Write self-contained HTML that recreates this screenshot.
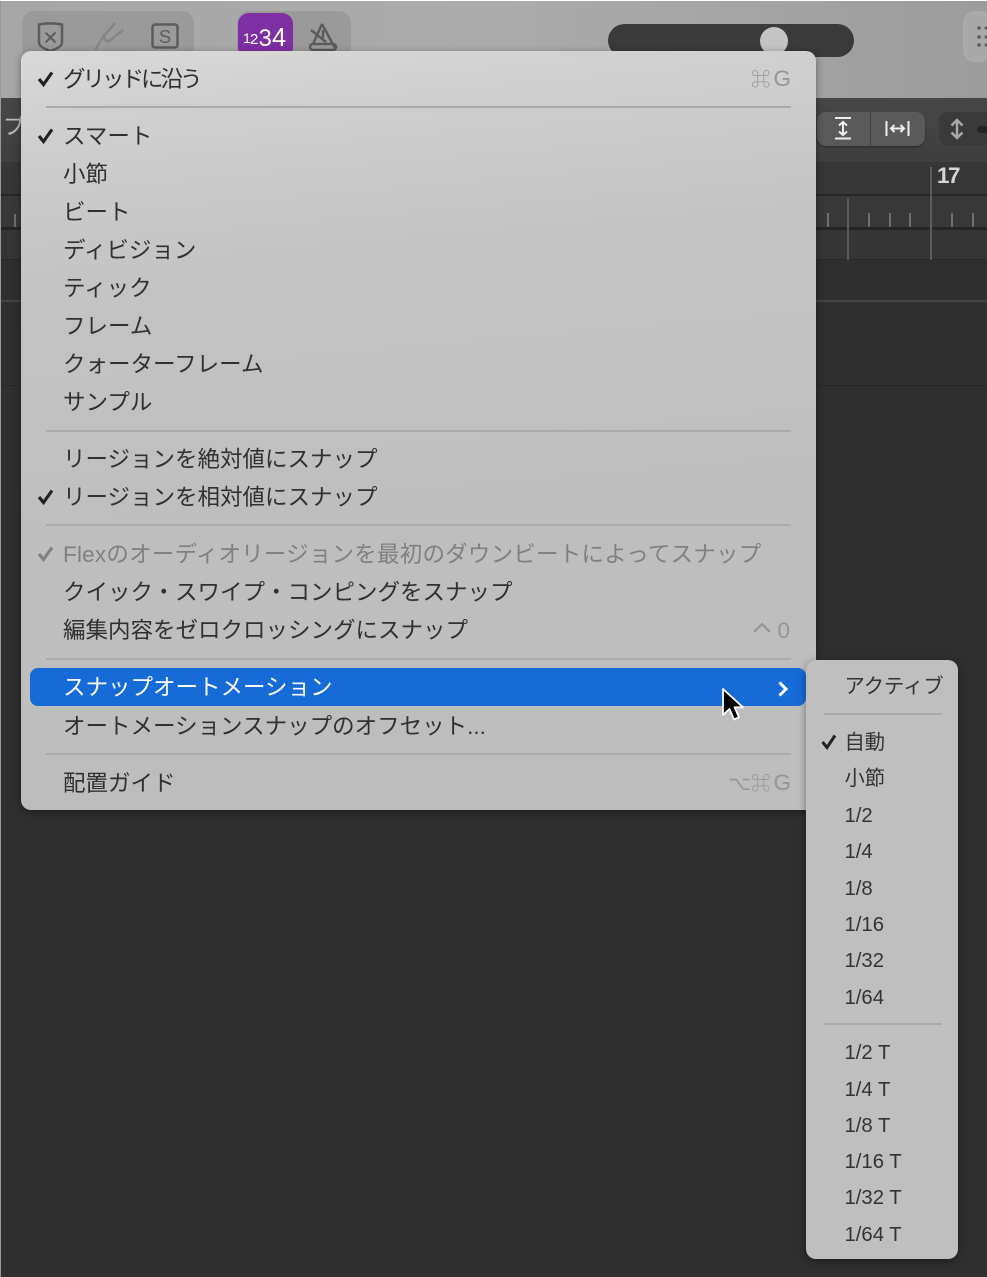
<!DOCTYPE html>
<html lang="ja"><head><meta charset="utf-8"><style>
html,body{margin:0;padding:0;background:#fff}
#p{position:relative;width:987px;height:1277px;overflow:hidden;background:#2f2f2f;font-family:"Liberation Sans","Noto Sans CJK JP",sans-serif}
#p>*{position:absolute}
.r{position:absolute;height:38px;line-height:38px;white-space:nowrap;color:#303030;font-size:22.5px;left:42px;margin-top:1px}
.menu{position:absolute;border-radius:10px;box-shadow:0 2px 8px rgba(0,0,0,.4)}
.sep{position:absolute;height:2px;background:#aaa}
.s{position:absolute;height:36px;line-height:36px;white-space:nowrap;color:#333;font-size:20.3px;left:38.5px;margin-top:1px}
.k{position:absolute;color:#959595;font-size:22.5px;height:38px;line-height:38px;white-space:nowrap;text-align:right}
.k i{font-style:normal;font-size:19.5px;margin-right:3px}
.c{position:absolute}
</style></head><body><div id="p">
<div style="left:1px;top:1px;width:986px;height:97px;background:linear-gradient(90deg,#a6a6a6,#acacac 50%,#9c9c9c)"></div>
<div style="left:0;top:0;width:1px;height:1277px;background:#999"></div>
<div style="left:0;top:0;width:987px;height:1px;background:#fff"></div>
<div style="left:22px;top:11px;width:172px;height:50px;border-radius:12px;background:#9a9a9a"></div>
<div style="left:237px;top:11px;width:114px;height:50px;border-radius:12px;background:#9a9a9a"></div>
<div style="left:238px;top:13px;width:55px;height:45px;border-radius:11px;background:#7d2fa3"></div>
<svg style="left:238px;top:13px" width="56" height="40" font-family="Liberation Sans" fill="#fff"><text x="5" y="30" font-size="14">1</text><text x="12" y="31" font-size="15">2</text><text x="20.500" y="33" font-size="24">3</text><text x="34" y="33" font-size="25.500">4</text></svg>
<svg style="left:30px;top:18px" width="330" height="36" fill="none" stroke="#5c5c5c" stroke-width="2.500">
<path d="M9 6.500c7-1.500 15-1.500 23 0v18c0 4-7 7-11.500 8.500C16 31.500 9 28.500 9 24.500z"/><path d="M15.500 14.500l10 10M25.500 14.500l-10 10" stroke-width="2"/>
<path d="M65 32l8-13 5 5M73 19l12-14M78 24l15-12" stroke="#858585" stroke-width="2.500"/>
<rect x="122.500" y="6.500" width="25" height="23" rx="2.500"/>
<text x="135" y="25" font-family="Liberation Sans" font-size="18.500" fill="#5c5c5c" stroke="none" text-anchor="middle">S</text>
<path d="M292 6l-9 20M292 6l13 24M281 12l15 12M293 12v8"/><rect x="280" y="26" width="26" height="6" rx="3"/></svg>
<div style="left:608px;top:24px;width:246px;height:33px;border-radius:17px;background:#3a3a3a"></div>
<div style="left:760px;top:27px;width:28px;height:28px;border-radius:14px;background:#c4c4c4"></div>
<div style="left:963px;top:11px;width:30px;height:51px;border-radius:11px;background:#a9a9a9"></div>
<svg style="left:975px;top:24px" width="12" height="26" fill="#5a5a5a"><circle cx="4" cy="4" r="1.800"/><circle cx="4" cy="13" r="1.800"/><circle cx="4" cy="21" r="1.800"/><circle cx="11" cy="4" r="1.500"/><circle cx="11" cy="13" r="1.500"/><circle cx="11" cy="21" r="1.500"/></svg>

<div style="left:1px;top:98px;width:986px;height:64px;background:linear-gradient(#474747,#3f3f3f)"></div>
<div style="left:1px;top:162px;width:986px;height:33px;background:#363636"></div>
<div style="left:1px;top:194px;width:986px;height:2px;background:#262626"></div>
<div style="left:1px;top:196px;width:986px;height:32px;background:#383838"></div>
<div style="left:1px;top:227px;width:986px;height:3px;background:#252525"></div>
<div style="left:1px;top:230px;width:986px;height:29px;background:#353535"></div>
<div style="left:1px;top:259px;width:986px;height:1px;background:#272727"></div>
<div style="left:1px;top:300px;width:986px;height:2px;background:#444"></div>
<div style="left:1px;top:385px;width:986px;height:1px;background:#272727"></div>
<div style="left:3px;top:111px;color:#bdbdbd;font-size:22px;line-height:32px">プ</div>
<div style="left:14px;top:214px;width:2px;height:13px;background:#6f6f6f"></div>
<div style="left:817px;top:112px;width:108px;height:34px;border-radius:9px;background:#5a5a5a;box-shadow:0 1px 2px rgba(0,0,0,.35)"></div>
<div style="left:870px;top:112px;width:1px;height:34px;background:#3d3d3d"></div>
<div style="left:939px;top:112px;width:48px;height:34px;border-radius:9px 0 0 9px;background:#3a3a3a"></div>
<div style="left:977px;top:126px;width:10px;height:7px;border-radius:4px 0 0 4px;background:#242424"></div>
<svg style="left:825px;top:114px" width="155" height="30" fill="none" stroke="#eee" stroke-width="2">
<path d="M10 4h16M10 24.500h16"/><path d="M18 8v13M14 11.500L18 8l4 3.500M14 17.500L18 21l4-3.500"/>
<path d="M61.500 7v15M83.500 7v15M66 14.500h13M69.500 11L66 14.500l3.500 3.500M75.500 11l3.500 3.500-3.500 3.500"/>
<path d="M132 6v18M126.500 11.500L132 6l5.500 5.500M126.500 18.500L132 24l5.500-5.500" stroke="#a8a8a8" stroke-width="2.500"/></svg>
<div style="left:937px;top:162px;color:#d5d5d5;font-size:22.5px;font-weight:bold;letter-spacing:-1.500px;line-height:28px">17</div>
<div style="left:930px;top:167px;width:2px;height:93px;background:#5d5d5d"></div>
<div style="left:847px;top:198px;width:2px;height:62px;background:#5a5a5a"></div>
<div style="left:827px;top:213px;width:2px;height:14px;background:#6f6f6f"></div>
<div style="left:868px;top:213px;width:2px;height:14px;background:#6f6f6f"></div>
<div style="left:889px;top:213px;width:2px;height:14px;background:#6f6f6f"></div>
<div style="left:909px;top:213px;width:2px;height:14px;background:#6f6f6f"></div>
<div style="left:951px;top:213px;width:2px;height:14px;background:#6f6f6f"></div>
<div style="left:972px;top:213px;width:2px;height:14px;background:#6f6f6f"></div>

<div class="menu" style="left:21px;top:51px;width:795px;height:759px;background:linear-gradient(175deg,#d9d9d9 0,#d0d0d0 8%,#c3c3c3 30%,#bebebe 60%,#bdbdbd 100%)">
<svg class="c" style="left:15px;top:18px" width="20" height="20"><path d="M3 10l4.500 5.500L16 3.500" fill="none" stroke="#222" stroke-width="3.200"/></svg>
<svg class="c" style="left:15px;top:75px" width="20" height="20"><path d="M3 10l4.500 5.500L16 3.500" fill="none" stroke="#222" stroke-width="3.200"/></svg>
<svg class="c" style="left:15px;top:436px" width="20" height="20"><path d="M3 10l4.500 5.500L16 3.500" fill="none" stroke="#222" stroke-width="3.200"/></svg>
<svg class="c" style="left:15px;top:493px" width="20" height="20"><path d="M3 10l4.500 5.500L16 3.500" fill="none" stroke="#808080" stroke-width="3.200"/></svg>
<div class="r" style="top:9px;letter-spacing:-3px">グリッドに沿う</div><div class="k" style="top:9px;right:25px"><i>⌘</i>G</div>
<div class="sep" style="left:25px;width:745px;top:55px"></div>
<div class="r" style="top:66px">スマート</div>
<div class="r" style="top:104px">小節</div>
<div class="r" style="top:142px">ビート</div>
<div class="r" style="top:180px">ディビジョン</div>
<div class="r" style="top:218px">ティック</div>
<div class="r" style="top:256px">フレーム</div>
<div class="r" style="top:294px">クォーターフレーム</div>
<div class="r" style="top:332px">サンプル</div>
<div class="sep" style="left:25px;width:745px;top:379px"></div>
<div class="r" style="top:389px">リージョンを絶対値にスナップ</div>
<div class="r" style="top:427px">リージョンを相対値にスナップ</div>
<div class="sep" style="left:25px;width:745px;top:473px"></div>
<div class="r" style="top:484px;color:#808080;letter-spacing:.22px">Flexのオーディオリージョンを最初のダウンビートによってスナップ</div>
<div class="r" style="top:522px">クイック・スワイプ・コンピングをスナップ</div>
<div class="r" style="top:560px">編集内容をゼロクロッシングにスナップ</div>
<div class="k" style="top:561px;right:26px">0</div>
<svg class="c" style="left:731px;top:569px" width="20" height="16"><path d="M2 12l8-8 8 8" fill="none" stroke="#959595" stroke-width="2.200"/></svg>
<div class="sep" style="left:25px;width:745px;top:607px"></div>
<div style="position:absolute;left:9px;top:617px;width:776px;height:38px;background:#166bd6;border-radius:8px"></div>
<div class="r" style="top:617px;color:#fff">スナップオートメーション</div>
<svg class="c" style="left:755px;top:628px" width="16" height="20"><path d="M3.500 3.500l6.500 6.500-6.500 6.500" fill="none" stroke="#fff" stroke-width="3"/></svg>
<div class="r" style="top:656px">オートメーションスナップのオフセット...</div>
<div class="sep" style="left:25px;width:745px;top:702px"></div>
<div class="r" style="top:713px">配置ガイド</div>
<div class="k" style="top:713px;right:25px"><i>⌥⌘</i>G</div>
</div>

<div class="menu" style="left:806px;top:660px;width:152px;height:599px;background:#bfbfbf">
<div class="s" style="top:8px">アクティブ</div>
<div class="sep" style="left:18px;width:118px;top:53px"></div>
<svg class="c" style="left:14px;top:73px" width="18" height="18"><path d="M2.500 9l4.500 5.500L15 2.500" fill="none" stroke="#222" stroke-width="3"/></svg>
<div class="s" style="top:64px">自動</div>
<div class="s" style="top:100px">小節</div>
<div class="s" style="top:137px">1/2</div>
<div class="s" style="top:173px">1/4</div>
<div class="s" style="top:210px">1/8</div>
<div class="s" style="top:246px">1/16</div>
<div class="s" style="top:282px">1/32</div>
<div class="s" style="top:319px">1/64</div>
<div class="sep" style="left:18px;width:118px;top:363px"></div>
<div class="s" style="top:374px">1/2 T</div>
<div class="s" style="top:411px">1/4 T</div>
<div class="s" style="top:447px">1/8 T</div>
<div class="s" style="top:483px">1/16 T</div>
<div class="s" style="top:519px">1/32 T</div>
<div class="s" style="top:556px">1/64 T</div>
</div>
<svg style="left:718px;top:686px" width="30" height="38"><path d="M5 3v26l6.500-6 4.500 10.500 5-2.200-4.500-10H25z" fill="#000" stroke="#fff" stroke-width="1.800" stroke-linejoin="round"/></svg>
</div></body></html>
